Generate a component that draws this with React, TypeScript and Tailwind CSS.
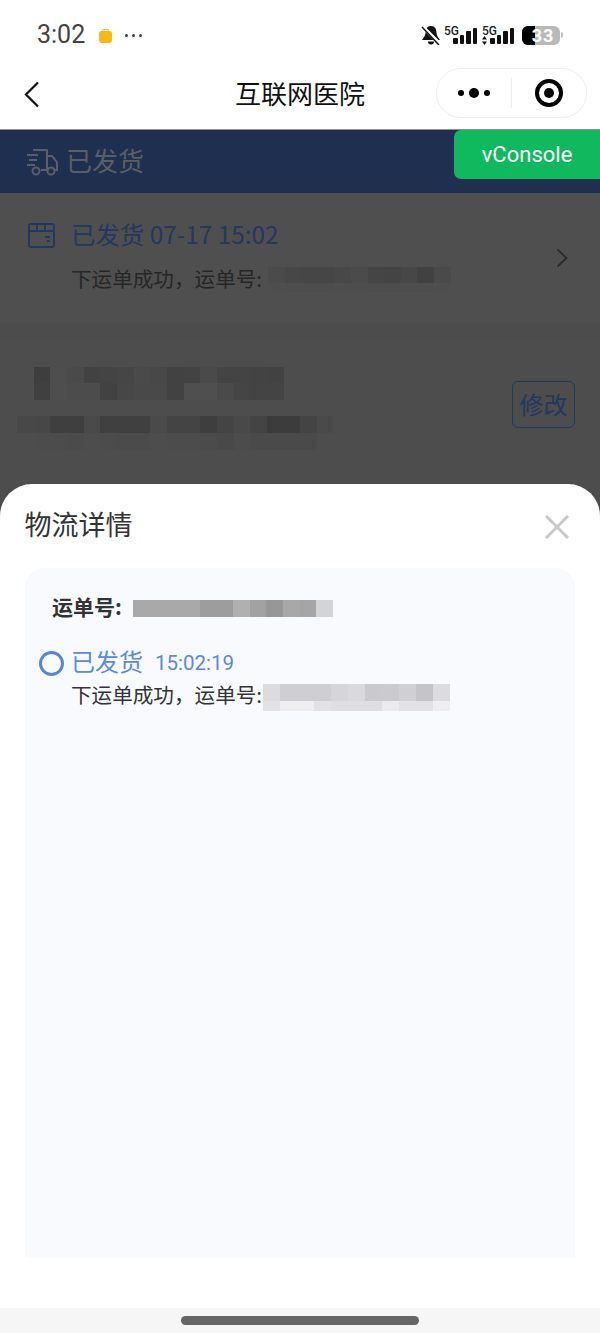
const CJK = "font-['Noto_Sans_CJK_SC','Noto_Sans',sans-serif]";

// mosaic rows hide the tracking number, each cell is one block of colour
function Mosaic({ rows, cell, heights }: { rows: string[][]; cell: number; heights: number[] }) {
  return (
    <div className="flex flex-col">
      {rows.map((row, i) => (
        <div key={i} className="flex">
          {row.map((c, j) => (
            <div key={j} style={{ width: cell, height: heights[i], background: c }} />
          ))}
        </div>
      ))}
    </div>
  );
}

const nameRows = [
  ["#4d4d4d", "#3e3e3e", "#4e4e4e", "#4a4a4a", "#424242", "#444444", "#464646", "#4a4a4a", "#484848", "#424242", "#434343", "#4a4a4a", "#444444", "#444444", "#434343", "#424242"],
  ["#4d4d4d", "#404040", "#4e4e4e", "#4c4c4c", "#4c4c4c", "#424242", "#474747", "#494949", "#494949", "#424242", "#4f4f4f", "#4f4f4f", "#4a4a4a", "#454545", "#444444", "#444444"],
];

const addressRows = [
  ["#484848", "#474747", "#3f3f3f", "#3f3f3f", "#4a4a4a", "#404040", "#404040", "#404040", "#4a4a4a", "#444444", "#444444", "#3e3e3e", "#444444", "#494949", "#444444", "#3c3c3c", "#3c3c3c", "#444444", "#4a4a4a"],
  ["#4d4d4d", "#4c4c4c", "#4c4c4c", "#4b4b4b", "#4d4d4d", "#4c4c4c", "#4b4b4b", "#4b4b4b", "#4d4d4d", "#4c4c4c", "#4c4c4c", "#4b4b4b", "#494949", "#4c4c4c", "#4a4a4a", "#4a4a4a", "#4a4a4a", "#4a4a4a", "#4d4d4d"],
];

function Signal({ className, arrows }: { className?: string; arrows?: boolean }) {
  return (
    <div className={"relative h-[19px] w-[33px] " + (className ?? "")}>
      <span className={"absolute top-0 font-['Roboto',sans-serif] text-[12px] font-medium leading-[10px] text-[#222] " + (arrows ? "left-[1px]" : "left-0")}>5G</span>
      {arrows && (
        <svg className="absolute left-[1px] top-[10px]" width="5" height="9" viewBox="0 0 5 9">
          <path d="M2.5 0L5 3.5H0zM2.5 9L0 5.5h5z" fill="#111" />
        </svg>
      )}
      <div className="absolute bottom-[1px] right-0 flex items-end gap-[2px]">
        <span className="h-[6px] w-[4.5px] rounded-[1px] bg-[#111]" />
        <span className="h-[9px] w-[4.5px] rounded-[1px] bg-[#111]" />
        <span className="h-[13px] w-[4.5px] rounded-[1px] bg-[#111]" />
        <span className="h-[16px] w-[4.5px] rounded-[1px] bg-[#111]" />
      </div>
    </div>
  );
}

function StatusBar() {
  return (
    <div className="flex h-[66px] items-center justify-between bg-white pl-[37px] pr-[37px] pt-[4px]">
      <div className="flex items-center">
        <span className="font-['Roboto',sans-serif] text-[25px] text-[#444]">3:02</span>
        <span className="relative ml-[14px] mt-[4px] h-[12px] w-[13px] rounded-[3px] bg-[#fdb913]">
          <span className="absolute left-[3px] top-[-2px] h-[3px] w-[7px] rounded-t-[2px] border border-b-0 border-[#fdb913]" />
        </span>
        <span className="ml-[13px] flex gap-[4px]">
          <span className="h-[3px] w-[3px] rounded-full bg-[#444]" />
          <span className="h-[3px] w-[3px] rounded-full bg-[#444]" />
          <span className="h-[3px] w-[3px] rounded-full bg-[#444]" />
        </span>
      </div>
      <div className="flex items-center">
        <svg width="20" height="20" viewBox="0 0 20 20">
          <path d="M10 1C6 1 4.5 4 4.5 8 4.5 11 2 13 1 15h18c-1-2-3.5-4-3.5-7C15.5 4 14 1 10 1z" fill="#111" />
          <path d="M7 16.5a3 3 0 0 0 6 0z" fill="#111" />
          <path d="M1 1l18 18" stroke="#fff" strokeWidth="3.5" />
          <path d="M1 2l17 18" stroke="#111" strokeWidth="1.5" />
        </svg>
        <Signal className="ml-[3px]" />
        <Signal className="ml-[4px]" arrows />
        <div className="relative ml-[8px] flex h-[19px] w-[38px] overflow-hidden rounded-[6px] bg-[#b9b9b9]">
          <div className="h-full w-[13px] bg-black" />
          <span className="absolute inset-0 flex items-center justify-center pl-[4px] font-['Roboto',sans-serif] text-[18px] font-bold tracking-[1px] text-white">
            33
          </span>
        </div>
        <span className="ml-[1px] h-[6px] w-[2px] rounded-r-full bg-[#c4c4c4]" />
      </div>
    </div>
  );
}

function NavBar() {
  return (
    <div className="relative flex h-[64px] items-center justify-center border-b border-[#8a9099] bg-white pb-[10px]">
      <svg className="absolute left-[24px] top-[15px]" width="16" height="27" viewBox="0 0 16 27" fill="none">
        <path d="M14 1.5L2 13.5l12 12" stroke="#111" strokeWidth="2.2" />
      </svg>
      <span className={CJK + " text-[26px] leading-none text-[#111]"}>互联网医院</span>
      <div className="absolute right-[13px] top-[2px] flex h-[50px] w-[151px] items-center rounded-full border border-[#eeeeee]">
        <div className="flex w-[74px] items-center justify-center gap-[5px]">
          <span className="h-[6px] w-[6px] rounded-full bg-black" />
          <span className="h-[10px] w-[10px] rounded-full bg-black" />
          <span className="h-[6px] w-[6px] rounded-full bg-black" />
        </div>
        <div className="h-[30px] w-px bg-[#eeeeee]" />
        <div className="flex flex-1 items-center justify-center">
          <div className="flex h-[28px] w-[28px] items-center justify-center rounded-full border-[4px] border-black">
            <span className="h-[10px] w-[10px] rounded-full bg-black" />
          </div>
        </div>
      </div>
    </div>
  );
}

export default function App() {
  return (
    <div className={"relative flex h-[1333px] w-[600px] flex-col overflow-hidden bg-[#4d4d4d] " + CJK}>
      <StatusBar />
      <NavBar />
      <div className="flex h-[63px] items-center bg-[#1f2f50] pl-[26px]">
        <svg width="33" height="28" viewBox="0 0 33 28" fill="none" stroke="#5a5e66" strokeWidth="2">
          <path d="M7 2h14v20h-6M21 8h5l5 6v8h-3M21 22h1" />
          <path d="M1 7h11M3 12h8M1 17h8" />
          <circle cx="10" cy="23" r="3.5" />
          <circle cx="25" cy="23" r="3.5" />
        </svg>
        <span className="ml-[7px] pb-[4px] text-[26px] leading-none text-[#5a5e66]">已发货</span>
      </div>
      <div className="relative h-[130px] bg-[#4f4f4f] pl-[28px] pt-[27px]">
        <div className="flex items-center">
          <svg width="27" height="25" viewBox="0 0 27 25" fill="none" stroke="#22385f" strokeWidth="2">
            <rect x="1" y="1" width="25" height="23" rx="2" />
            <path d="M1 8h25M9 1v7M17 1v7M17 14h5M19 18h3" />
          </svg>
          <span className="ml-[16px] h-[30px] text-[24.4px] leading-[27px] text-[#22385f]">已发货 07-17 15:02</span>
        </div>
        <div className="mt-[14px] flex items-center pl-[43px]">
          <span className="h-[30px] text-[20.6px] leading-[28px] text-[#262626]">下运单成功，运单号:</span>
          <div className="ml-[6px]">
            <Mosaic
              cell={16.6}
              heights={[16, 9]}
              rows={[
                ["#4b4b4b", "#474747", "#464646", "#464646", "#484848", "#4b4b4b", "#454545", "#444444", "#474747", "#414141", "#4a4a4a"],
                ["#4e4e4e", "#4d4d4d", "#4d4d4d", "#4d4d4d", "#4e4e4e", "#4e4e4e", "#4d4d4d", "#4d4d4d", "#4d4d4d", "#4d4d4d", "#4e4e4e"],
              ]}
            />
          </div>
        </div>
        <svg className="absolute right-[31px] top-[55px]" width="13" height="20" viewBox="0 0 13 20" fill="none">
          <path d="M1.5 1.5l9 8.5-9 8.5" stroke="#2b2b2b" strokeWidth="1.8" />
        </svg>
      </div>
      <div className="h-[16px] bg-[#4c4c4c]" />
      <div className="flex flex-1 justify-between pl-[17px] pr-[25px] pt-[28px]">
        <div className="flex flex-col gap-[16px]">
          <Mosaic cell={16.67} heights={[16, 17]} rows={nameRows} />
          <Mosaic cell={16.67} heights={[17, 17]} rows={addressRows} />
        </div>
        <div className="mt-[14px] flex h-[47px] w-[63px] items-center justify-center rounded-[6px] border-[1.5px] border-[#21385f] pb-[2px] text-[24px] text-[#21385f]">
          修改
        </div>
      </div>

      <div className="absolute right-0 top-[130px] flex h-[49px] w-[146px] items-center justify-center rounded-l-[7px] bg-[#10b85e] font-['Roboto',sans-serif] text-[22px] text-white">
        vConsole
      </div>

      {/* bottom sheet over the page */}
      <div className="absolute inset-x-0 bottom-0 top-[484px] flex flex-col rounded-t-[32px] bg-white">
        <div className="relative flex h-[84px] items-start pl-[24.5px] pt-[23px]">
          <span className="text-[27px] leading-[34px] text-[#333]">物流详情</span>
          <svg className="absolute right-[31px] top-[31px]" width="24" height="24" viewBox="0 0 24 24" fill="none">
            <path d="M1 1l22 22M23 1L1 23" stroke="#c9c9c9" strokeWidth="3" />
          </svg>
        </div>
        <div className="mx-[25px] h-[690px] rounded-t-[20px] bg-[#f8fafe] pl-[27px] pt-[26px]">
          <div className="flex items-center">
            <span className="h-[28px] w-[81px] text-[21px] font-bold leading-[24px] text-[#333]">运单号:</span>
            <Mosaic
              cell={16.67}
              heights={[17]}
              rows={[["#a9a9a9", "#a9a9a9", "#a9a9a9", "#a9a9a9", "#9d9d9d", "#9d9d9d", "#b0b0b0", "#a2a2a2", "#979797", "#a8a8a8", "#a5a5a5", "#d3d3d8"]]}
            />
          </div>
          <div className="ml-[-13px] mt-[26px] flex h-[30px] items-center">
            <span className="h-[25px] w-[25px] rounded-full border-[3px] border-[#5585dc]" />
            <span className="ml-[7px] h-[30px] text-[24px] leading-[26px] text-[#5b8ae0]">已发货</span>
            <span className="ml-[12px] h-[30px] font-['Roboto',sans-serif] text-[20.5px] leading-[30px] text-[#5b8ae0]">15:02:19</span>
          </div>
          <div className="ml-[19px] mt-[3px] flex items-center">
            <span className="h-[32px] text-[20.6px] leading-[26px] text-[#333]">下运单成功，运单号:</span>
            <div className="ml-[1px]">
              <Mosaic
                cell={17}
                heights={[17, 10]}
                rows={[
                  ["#dcdce0", "#cfcfd3", "#cfcfd3", "#cfcfd3", "#d6d6da", "#dadade", "#c9c9ce", "#cbcbcf", "#d0d0d4", "#c5c5c9", "#dcdce0"],
                  ["#e2e2e6", "#eeeef0", "#eeeef0", "#e2e2e6", "#dfdfe3", "#dfdfe3", "#dfdfe3", "#ebebee", "#e2e2e6", "#e2e2e6", "#eeeef2"],
                ]}
              />
            </div>
          </div>
        </div>
        <div className="flex-1" />
        <div className="flex h-[25px] items-center justify-center bg-[#f6f6f6]">
          <div className="h-[9px] w-[238px] rounded-full bg-[#666]" />
        </div>
      </div>
    </div>
  );
}
